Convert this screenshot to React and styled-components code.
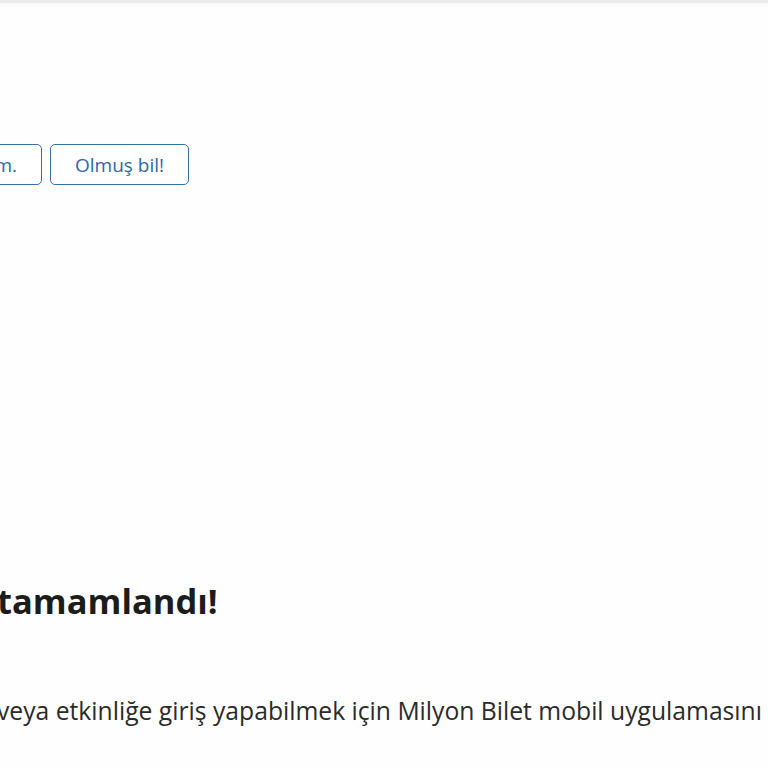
import React from 'react';
import styled, { createGlobalStyle } from 'styled-components';

const GlobalStyle = createGlobalStyle`
  html, body {
    margin: 0;
    padding: 0;
    background: #fefefe;
    overflow: hidden;
  }
  body {
    font-family: 'Open Sans', 'Noto Sans', sans-serif;
    color: #1f1f1f;
  }
`;

const Page = styled.div`
  width: 768px;
  height: 768px;
  overflow: hidden;
  display: flex;
  flex-direction: column;
`;

const TopBar = styled.div`
  height: 3px;
  background: #ebebeb;
  box-shadow: 0 1px 4px rgba(0, 0, 0, 0.06);
`;

const ButtonRow = styled.div`
  display: flex;
  gap: 8px;
  margin-top: 141px;
  margin-left: ${(p) => p.$shift}px;
`;

const OutlineButton = styled.button`
  height: 41px;
  padding: 0 24px;
  border: 1.5px solid #3a6ea5;
  border-radius: 5px;
  background: #fff;
  color: #2f67a3;
  font-family: 'Open Sans', 'Noto Sans', sans-serif;
  font-size: 19px;
  white-space: nowrap;
  cursor: pointer;
`;

const Content = styled.div`
  display: flex;
  flex-direction: column;
  margin-top: 392px;
  margin-left: ${(p) => p.$shift}px;
`;

const Heading = styled.h1`
  margin: 0;
  font-size: 34.5px;
  font-weight: 700;
  line-height: 48px;
  white-space: nowrap;
  color: #1c1c1c;
`;

const Message = styled.p`
  margin: 70px 0 0;
  font-size: 24.7px;
  line-height: 32px;
  white-space: nowrap;
  color: #2b2b2b;
`;

export default function App() {
  return (
    <>
      <GlobalStyle />
      <Page>
        <TopBar />
        <ButtonRow $shift={-86}>
          <OutlineButton>Anladım.</OutlineButton>
          <OutlineButton>Olmuş bil!</OutlineButton>
        </ButtonRow>
        <Content $shift={-3}>
          <Heading>tamamlandı!</Heading>
          <Message>
            veya etkinliğe giriş yapabilmek için Milyon Bilet mobil uygulamasını indirmeniz gerekmektedir.
          </Message>
        </Content>
      </Page>
    </>
  );
}
